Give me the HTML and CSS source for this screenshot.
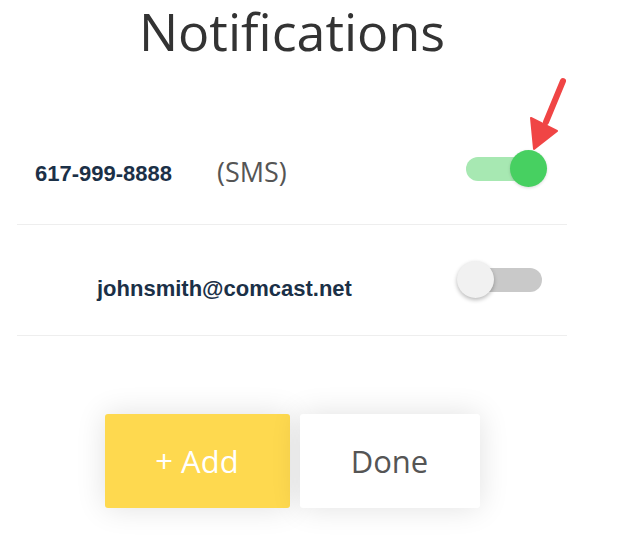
FILE: index.html
```html
<!DOCTYPE html>
<html lang="en">
<head>
  <meta charset="UTF-8" />
  <meta name="viewport" content="width=device-width, initial-scale=1" />
  <title>Notifications</title>
  <link rel="stylesheet" href="styles.css">
</head>
<body>

  <div class="panel">
    <h1 class="title">Notifications</h1>

    <div class="row row-sms">
      <span class="contact">617-999-8888</span>
      <span class="kind">(SMS)</span>
      <div class="toggle on">
        <span class="knob"></span>
        <!-- red pointer arrow drawn over the screenshot -->
        <svg class="pointer" width="45" height="78" viewBox="0 0 45 78">
          <line x1="36" y1="6" x2="19" y2="47" stroke="#f04545" stroke-width="6" stroke-linecap="round"/>
          <polygon points="4,43 30,56 7,74" fill="#f04545" stroke="#f04545" stroke-width="2" stroke-linejoin="round"/>
        </svg>
      </div>
    </div>

    <div class="row row-email">
      <span class="contact">johnsmith@comcast.net</span>
      <div class="toggle">
        <span class="knob"></span>
      </div>
    </div>

    <div class="actions">
      <button class="btn btn-add">+ Add</button>
      <button class="btn btn-done">Done</button>
    </div>
  </div>

</body>
</html>
```

FILE: styles.css
```css
body { margin: 0; background: #fff; font-family: 'Open Sans', sans-serif; }
.panel { width: 550px; margin-left: 17px; padding-bottom: 40px; }
.title {
  margin: 0 0 52px; text-align: center; font-weight: normal;
  font-size: 52px; line-height: 62px; color: #333;
}
.row {
  display: flex; align-items: center; height: 110px;
  border-bottom: 1px solid #eee;
}
.contact {
  font-family: 'Liberation Sans', Arial, sans-serif; font-weight: bold;
  font-size: 22px; line-height: 22px; color: #1b3047; margin-top: 10px;
}
.row-sms .contact { margin-left: 18px; }
.row-email .contact { margin-left: 80px; margin-top: 17px; }
.kind { font-size: 27px; line-height: 27px; color: #555; margin-left: 45px; margin-top: 4px; }

.toggle {
  position: relative; width: 90px; height: 37px;
  margin-left: auto; margin-right: 20px; margin-top: -2px;
}
.toggle::before {
  content: ""; position: absolute; left: 9px; right: 5px; top: 7px; height: 24px;
  border-radius: 12px; background: #c9c9c9;
}
.toggle .knob {
  position: absolute; left: 0; top: 0; width: 37px; height: 37px; border-radius: 50%;
  background: #f1f1f1; box-shadow: 0 2px 4px rgba(0, 0, 0, .28);
}
.toggle.on::before { background: #a7e8b2; }
.toggle.on .knob { left: auto; right: 0; background: #47d061; box-shadow: 0 1px 3px rgba(0, 0, 0, .15); }
.pointer { position: absolute; left: 70px; top: -75px; }

.actions { display: flex; justify-content: center; gap: 10px; margin-top: 78px; }
.btn {
  height: 94px; border: none; border-radius: 3px; font-family: 'Open Sans', sans-serif;
  font-size: 31px; box-shadow: 0 0 30px rgba(0, 0, 0, .12);
}
.btn-add { width: 185px; background: #fed94f; color: #fff; }
.btn-done { width: 180px; background: #fff; color: #555; }
```
